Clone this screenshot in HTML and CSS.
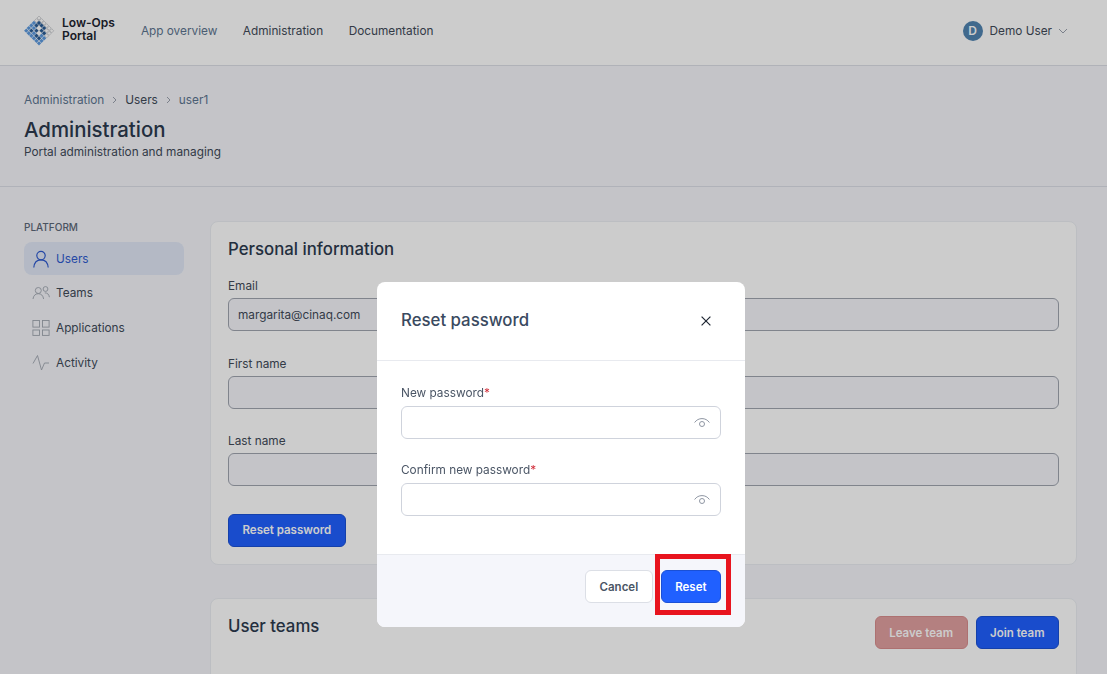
FILE: index.html
```html
<!DOCTYPE html>
<html lang="en">
<head>
  <meta charset="UTF-8">
  <title>Low-Ops Portal</title>
  <link rel="stylesheet" href="styles.css">
</head>
<body>
  <header class="topbar">
    <div class="brand">
      <svg class="brand-mark" width="32" height="34" viewBox="0 0 32 34">
        <g transform="translate(16 17) rotate(45) scale(.72) translate(-15 -15)">
          <g fill="none" stroke="#b9bbc0" stroke-width=".8">
            <rect x="0.3" y="0.3" width="4" height="4"/>
            <rect x="5.300" y="0.3" width="4" height="4"/>
            <rect x="10.300" y="0.3" width="4" height="4"/>
            <rect x="15.300" y="0.3" width="4" height="4"/>
            <rect x="20.300" y="0.3" width="4" height="4"/>
            <rect x="25.300" y="0.3" width="4" height="4"/>
            <rect x="25.300" y="5.300" width="4" height="4"/>
            <rect x="25.300" y="10.300" width="4" height="4"/>
            <rect x="20.300" y="5.300" width="4" height="4"/>
            <rect x="0.3" y="5.300" width="4" height="4"/>
          </g>
          <g fill="#5d9be0">
            <rect x="0" y="10" width="4.300" height="4.300"/>
            <rect x="0" y="15" width="4.300" height="4.300"/>
            <rect x="0" y="20" width="4.300" height="4.300"/>
            <rect x="0" y="25" width="4.300" height="4.300"/>
            <rect x="5" y="25" width="4.300" height="4.300"/>
            <rect x="10" y="25" width="4.300" height="4.300"/>
            <rect x="15" y="25" width="4.300" height="4.300"/>
            <rect x="20" y="25" width="4.300" height="4.300"/>
            <rect x="25" y="25" width="4.300" height="4.300"/>
            <rect x="25" y="20" width="4.300" height="4.300"/>
            <rect x="25" y="15" width="4.300" height="4.300"/>
            <rect x="5" y="15" width="4.300" height="4.300"/>
            <rect x="10" y="20" width="4.300" height="4.300"/>
            <rect x="20" y="15" width="4.300" height="4.300"/>
          </g>
          <g fill="#2a5d96">
            <rect x="5" y="5" width="4.300" height="4.300"/>
            <rect x="10" y="5" width="4.300" height="4.300"/>
            <rect x="15" y="5" width="4.300" height="4.300"/>
            <rect x="5" y="10" width="4.300" height="4.300"/>
            <rect x="15" y="10" width="4.300" height="4.300"/>
            <rect x="20" y="10" width="4.300" height="4.300"/>
            <rect x="10" y="15" width="4.300" height="4.300"/>
            <rect x="15" y="20" width="4.300" height="4.300"/>
            <rect x="20" y="20" width="4.300" height="4.300"/>
            <rect x="5" y="20" width="4.300" height="4.300"/>
          </g>
        </g>
      </svg>
      <div class="brand-name">Low-Ops<br>Portal</div>
    </div>
    <nav class="mainnav">
      <a class="mainnav-link mainnav-current" href="#">App overview</a>
      <a class="mainnav-link" href="#">Administration</a>
      <a class="mainnav-link" href="#">Documentation</a>
    </nav>
    <div class="usermenu">
      <span class="avatar">D</span>
      <span class="usermenu-name">Demo User</span>
      <svg width="10" height="6" viewBox="0 0 10 6" fill="none" stroke="#9aa1ad" stroke-width="1"><path d="M1 1l4 4 4-4"/></svg>
    </div>
  </header>

  <section class="pagehead">
    <div class="crumbs">
      <a href="#">Administration</a>
      <svg class="crumb-sep" width="5" height="8" viewBox="0 0 5 8" fill="none" stroke="#9aa1ad"><path d="M1 1l3 3-3 3"/></svg>
      <span class="crumb-mid">Users</span>
      <svg class="crumb-sep" width="5" height="8" viewBox="0 0 5 8" fill="none" stroke="#9aa1ad"><path d="M1 1l3 3-3 3"/></svg>
      <a href="#">user1</a>
    </div>
    <h1>Administration</h1>
    <p>Portal administration and managing</p>
  </section>

  <div class="layout">
    <aside class="sidebar">
      <div class="sidebar-title">PLATFORM</div>
      <a class="side-item side-active" href="#">
        <svg width="18" height="18" viewBox="0 0 18 18" fill="none" stroke="#2f5bd0" stroke-width="1.200"><circle cx="9" cy="5.600" r="4.200"/><path d="M1.800 17.500c.4-4.800 3.200-7.700 7.200-7.700s6.800 2.900 7.200 7.700"/></svg>
        Users
      </a>
      <a class="side-item" href="#">
        <svg width="18" height="18" viewBox="0 0 18 18" fill="none" stroke="#a0a6b0" stroke-width=".9"><circle cx="6.300" cy="6.500" r="3"/><path d="M1 15c.4-3.400 2.400-5.300 5.300-5.300s4.900 1.900 5.300 5.300"/><circle cx="13.500" cy="5" r="2.400"/><path d="M12.800 8.900c2.500-.2 4.200 1.400 4.600 4.300"/></svg>
        Teams
      </a>
      <a class="side-item" href="#">
        <svg width="18" height="18" viewBox="0 0 18 18" fill="none" stroke="#a0a6b0" stroke-width=".9"><rect x=".9" y="1.500" width="6.600" height="6.600"/><rect x="10.500" y="1.500" width="6.600" height="6.600"/><rect x=".9" y="11" width="6.600" height="5.400"/><rect x="10.500" y="11" width="6.600" height="5.400"/></svg>
        Applications
      </a>
      <a class="side-item" href="#">
        <svg width="18" height="18" viewBox="0 0 18 18" fill="none" stroke="#a0a6b0" stroke-width=".9"><path d="M1 9.500L5.500 1.500 9.500 16l3-7H17"/></svg>
        Activity
      </a>
    </aside>

    <main class="content">
      <section class="card">
        <h2>Personal information</h2>
        <div class="field">
          <label>Email</label>
          <input class="input" type="text" value="margarita@cinaq.com" disabled>
        </div>
        <div class="field">
          <label>First name</label>
          <input class="input" type="text" disabled>
        </div>
        <div class="field field-last">
          <label>Last name</label>
          <input class="input" type="text" disabled>
        </div>
        <button class="btn btn-primary" type="button">Reset password</button>
      </section>

      <section class="card card-teams">
        <div class="card-row">
          <h2>User teams</h2>
          <div class="card-actions">
            <button class="btn btn-danger" type="button">Leave team</button>
            <button class="btn btn-primary" type="button">Join team</button>
          </div>
        </div>
      </section>
    </main>
  </div>

  <div class="overlay"></div>

  <div class="modal">
    <div class="modal-head">
      <h3>Reset password</h3>
      <svg class="modal-close" width="10" height="10" viewBox="0 0 10 10" fill="none" stroke="#1f2733" stroke-width="1.200"><path d="M.6.6l8.800 8.800M9.400.6L.6 9.400"/></svg>
    </div>
    <div class="modal-body">
      <div class="modal-field">
        <label>New password<span class="req">*</span></label>
        <div class="pass">
          <input class="pass-input" type="password">
          <svg class="pass-eye" width="16" height="10" viewBox="0 0 16 10" fill="none" stroke="#8f96a3" stroke-width="1"><path d="M.6 4.500C2.500 1.900 5 .6 8 .6s5.500 1.300 7.400 3.900"/><circle cx="8" cy="6" r="2.500"/></svg>
        </div>
      </div>
      <div class="modal-field">
        <label>Confirm new password<span class="req">*</span></label>
        <div class="pass">
          <input class="pass-input" type="password">
          <svg class="pass-eye" width="16" height="10" viewBox="0 0 16 10" fill="none" stroke="#8f96a3" stroke-width="1"><path d="M.6 4.500C2.500 1.900 5 .6 8 .6s5.500 1.300 7.400 3.900"/><circle cx="8" cy="6" r="2.500"/></svg>
        </div>
      </div>
    </div>
    <div class="modal-foot">
      <button class="btn btn-plain" type="button">Cancel</button>
      <button class="btn btn-reset" type="button">Reset</button>
      <div class="highlight"></div>
    </div>
  </div>
</body>
</html>
```
FILE: styles.css
```css
* {
  box-sizing: border-box;
}
html, body {
  height: 100%;
}
body {
  margin: 0;
  height: 674px;
  overflow: hidden;
  font-family: 'Inter', 'Liberation Sans', sans-serif;
  font-size: 11.8px;
  color: #344256;
  background: #f5f6fb;
}
a {
  text-decoration: none;
  color: inherit;
}

/* top bar */
.topbar {
  height: 66px;
  background: #fff;
  border-bottom: 1px solid #dcdfe6;
  display: flex;
  align-items: center;
  padding: 0 39px 4px 24px;
}
.brand {
  display: flex;
  align-items: center;
  gap: 7px;
  margin-left: -1px;
  margin-right: 26px;
}
.brand-name {
  font-size: 12px;
  font-weight: 600;
  line-height: 13px;
  color: #1d2530;
  margin-top: -3px;
}
.mainnav {
  display: flex;
  gap: 25.5px;
  flex: 1;
}
.mainnav-link {
  color: #414a58;
}
.mainnav-current {
  color: #5d7590;
}
.usermenu {
  display: flex;
  align-items: center;
  gap: 7px;
  color: #414a58;
}
.usermenu svg {
  margin-left: -1px;
}
.avatar {
  width: 20px;
  height: 20px;
  border-radius: 50%;
  background: #5184b1;
  color: #fff;
  font-size: 12px;
  font-weight: 600;
  display: flex;
  align-items: center;
  justify-content: center;
}

/* page heading */
.pagehead {
  height: 121px;
  border-bottom: 1px solid #dcdfe8;
  padding: 26px 24px 0;
}
.crumbs {
  display: flex;
  align-items: center;
  gap: 8px;
  height: 15px;
  color: #5d7590;
}
.crumb-mid {
  color: #414a58;
}
.pagehead h1 {
  margin: 11px 0 0;
  font-size: 20.4px;
  line-height: 24px;
  font-weight: 500;
  color: #2c3a4e;
}
.pagehead p {
  margin: 3px 0 0;
  line-height: 15px;
  color: #414a58;
}

/* sidebar + content */
.layout {
  display: flex;
  padding: 34px 30px 0 24px;
  gap: 26px;
}
.sidebar {
  width: 160px;
  flex: none;
}
.sidebar-title {
  font-size: 10px;
  font-weight: 500;
  line-height: 12px;
  margin-bottom: 9px;
  color: #5d6878;
}
.side-item {
  display: flex;
  align-items: center;
  gap: 6px;
  height: 33px;
  margin-bottom: 1.7px;
  padding-left: 8px;
  border-radius: 8px;
  color: #414a58;
}
.side-active {
  background: #e1e8f7;
  color: #2f5bd0;
}
.content {
  flex: 1;
}
.card {
  background: #fff;
  border: 1px solid #eceef3;
  border-radius: 8px;
  padding: 17px;
  margin-bottom: 33px;
  height: 344px;
}
.card h2 {
  margin: 0 0 20px;
  font-size: 16.8px;
  line-height: 20px;
  font-weight: 500;
  color: #2c3a4e;
}
.card-teams {
  height: 200px;
}
.card-row {
  display: flex;
  justify-content: space-between;
}
.card-actions {
  display: flex;
  gap: 8px;
}
.field {
  margin-bottom: 25.5px;
}
.field-last {
  margin-bottom: 27.5px;
}
.field label {
  display: block;
  line-height: 15px;
  margin-bottom: 4px;
  color: #414a58;
}
.input {
  display: block;
  width: 100%;
  height: 33px;
  padding: 0 9px;
  border: 1px solid #a0a5b0;
  border-radius: 6px;
  background: #f5f6fb;
  font: inherit;
  color: #414a58;
}
.btn {
  font: inherit;
  font-size: 11.5px;
  font-weight: 600;
  height: 33px;
  border-radius: 6px;
  padding: 0 13.5px;
  border: 1px solid transparent;
}
.btn-primary {
  background: #2060ff;
  border-color: #1a50d6;
  color: #fff;
}
.btn-danger {
  background: #e2a0a0;
  border-color: #d98e8e;
  color: #fff;
}

/* dialog */
.overlay {
  position: fixed;
  inset: 0;
  background: rgba(0, 0, 0, 0.2);
}
.modal {
  position: fixed;
  left: 377px;
  top: 282px;
  width: 368px;
  height: 345px;
  background: #fff;
  border-radius: 8px;
  display: flex;
  flex-direction: column;
}
.modal-head {
  height: 79px;
  flex: none;
  border-bottom: 1px solid #e8eaef;
  display: flex;
  justify-content: space-between;
  padding: 28px 34px 0 24px;
}
.modal-head h3 {
  margin: 0;
  font-size: 16.8px;
  line-height: 20px;
  font-weight: 500;
  color: #3a4a60;
}
.modal-close {
  margin-top: 6px;
}
.modal-body {
  flex: 1;
  padding: 25px 24px 0;
}
.modal-field {
  margin-bottom: 24px;
}
.modal-field label {
  display: block;
  line-height: 15px;
  margin-bottom: 5px;
  color: #4a5565;
}
.req {
  color: #d2303c;
}
.pass {
  position: relative;
}
.pass-input {
  display: block;
  width: 100%;
  height: 33px;
  border: 1px solid #cfd3dc;
  border-radius: 6px;
  background: #fff;
}
.pass-eye {
  position: absolute;
  right: 11px;
  top: 12px;
}
.modal-foot {
  position: relative;
  height: 73px;
  flex: none;
  background: #f5f6fb;
  border-top: 1px solid #e8eaef;
  border-radius: 0 0 8px 8px;
  display: flex;
  justify-content: flex-end;
  align-items: flex-start;
  gap: 8px;
  padding: 15px 24px 0;
}
.btn-plain {
  background: #fff;
  border-color: #dcdfe6;
  color: #4a5565;
}
.btn-reset {
  background: #2060ff;
  border-color: #1a50d6;
  color: #fff;
}
.highlight {
  position: absolute;
  left: 278px;
  top: -1px;
  width: 76px;
  height: 61px;
  border: 5px solid #e8141e;
}
```
